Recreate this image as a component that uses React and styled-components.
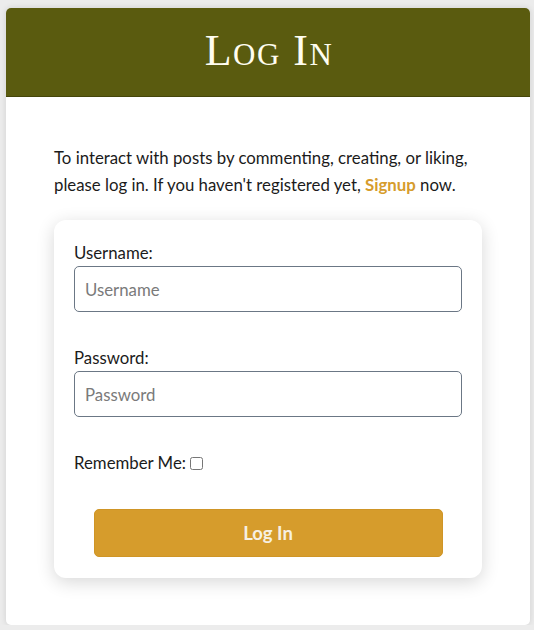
import styled, { createGlobalStyle } from "styled-components";

const GlobalStyle = createGlobalStyle`
    body{
        margin: 0;
        background: #ececec;
        font-family: Lato, "Open Sans", sans-serif;
        color: #1b1b1b;
    }
`;

const Page = styled.div`
    padding: 8px 4px 0 6px;
`;

const Card = styled.main`
    background: #fff;
    border-radius: 5px;
    box-shadow: 0 0 6px rgba(0,0,0,0.12);
    overflow: hidden;
    padding-bottom: 47px;
`;

const Header = styled.header`
    height: 88px;
    background: #5a5b0f;
    border-bottom: 1px solid #45460a;
    display: flex;
    align-items: center;
    justify-content: center;
`;

const Title = styled.h1`
    margin: 0;
    font-family: "Liberation Serif", "Times New Roman", serif;
    font-weight: 400;
    font-variant: small-caps;
    font-size: 44px;
    letter-spacing: 1.5px;
    color: #fffdf0;
    transform: translate(1px, -2px);
`;

const Body = styled.section`
    padding: 47px 48px 0 48px;
`;

const Intro = styled.p`
    margin: 0 0 22px;
    font-size: 16.8px;
    line-height: 27px;
`;

const SignupLink = styled.a`
    color: #d69c2c;
    font-weight: 700;
    text-decoration: none;
`;

const FormBox = styled.form`
    background: #fff;
    border-radius: 12px;
    box-shadow: 0 4px 18px rgba(0,0,0,0.16);
    padding: 22px 20px 21px;
    display: flex;
    flex-direction: column;
`;

const Field = styled.div`
    display: flex;
    flex-direction: column;
    margin-bottom: 35px;
`;

const Label = styled.label`
    font-size: 16.8px;
    margin-bottom: 3px;
`;

const Input = styled.input`
    box-sizing: border-box;
    height: 46px;
    width: 100%;
    border: 1px solid #6b7785;
    border-radius: 5px;
    padding: 0 10px;
    font-family: Lato, sans-serif;
    font-size: 16.8px;
    color: #222;
    outline: none;
    &::placeholder{
        color: #7a7a7a;
    }
`;

const CheckRow = styled.label`
    display: flex;
    align-items: center;
    font-size: 16.8px;
    margin: 0 0 36px;
    & input{
        width: 13px;
        height: 13px;
        margin: 1px 0 0 4px;
    }
`;

const SubmitBtn = styled.button`
    align-self: center;
    width: 349px;
    height: 48px;
    border: 1px solid #cf9526;
    border-radius: 5px;
    background: #d69c2c;
    color: #f7f0e2;
    font-family: Lato, sans-serif;
    font-weight: 700;
    font-size: 18.5px;
    cursor: pointer;
`;

const App = () => {
    return <>
        <GlobalStyle />
        <Page>
            <Card>
                <Header>
                    <Title>Log In</Title>
                </Header>
                <Body>
                    <Intro>
                        To interact with posts by commenting, creating, or liking, please log in. If you haven't registered yet, <SignupLink href="#">Signup</SignupLink> now.
                    </Intro>
                    <FormBox onSubmit={e => e.preventDefault()}>
                        <Field>
                            <Label htmlFor="username">Username:</Label>
                            <Input id="username" type="text" placeholder="Username" />
                        </Field>
                        <Field>
                            <Label htmlFor="password">Password:</Label>
                            <Input id="password" type="password" placeholder="Password" />
                        </Field>
                        <CheckRow>
                            Remember Me:<input type="checkbox" />
                        </CheckRow>
                        <SubmitBtn type="submit">Log In</SubmitBtn>
                    </FormBox>
                </Body>
            </Card>
        </Page>
    </>
}
export default App
